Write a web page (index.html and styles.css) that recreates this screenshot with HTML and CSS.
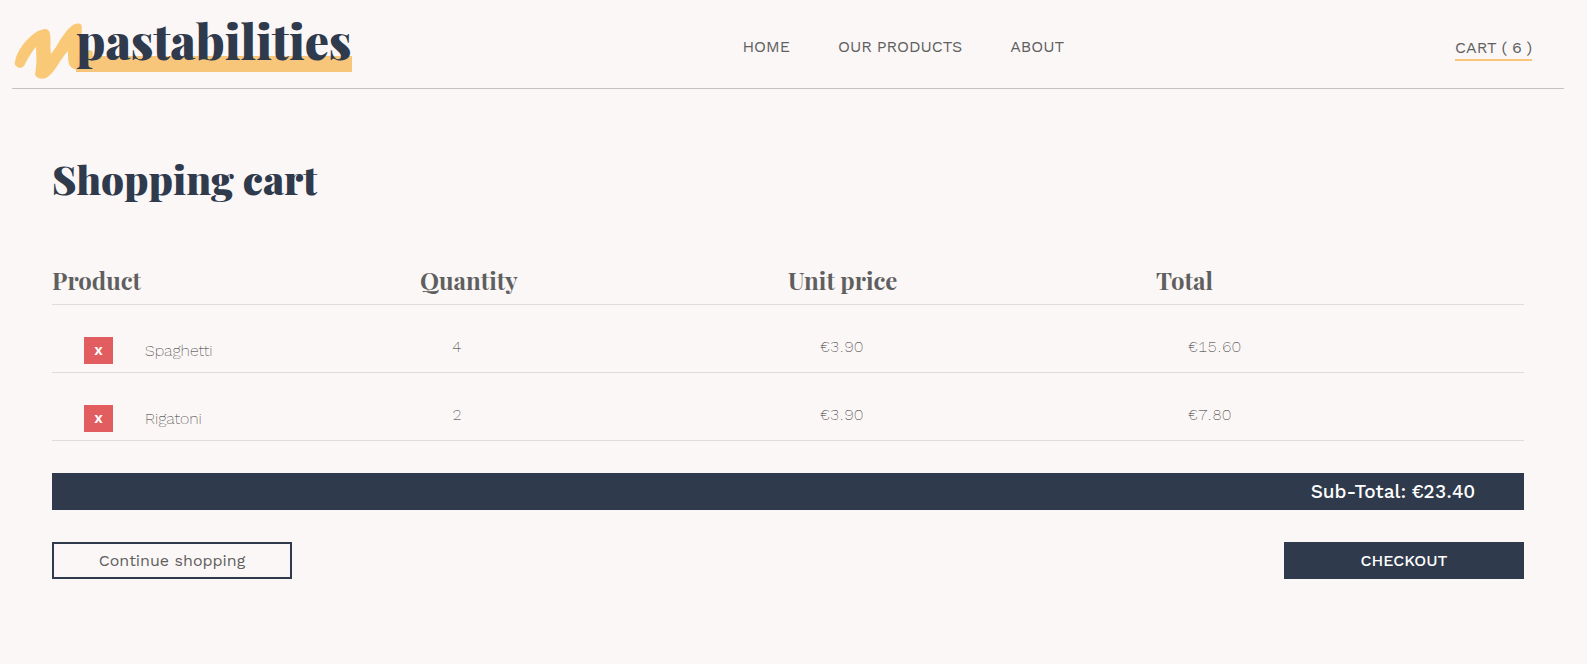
FILE: index.html
```
<!DOCTYPE html>
<html lang="en">
<head>
<meta charset="utf-8">
<meta name="viewport" content="width=device-width, initial-scale=1">
<title>Pastabilities – Shopping cart</title>
<link rel="stylesheet" href="styles.css">
</head>
<body>
<header class="header">
  <a class="logo" href="#">
    <svg class="logo-mark" viewBox="0 0 84 60" aria-hidden="true">
      <path d="M3 42C4 33 12 22 18 17C24 11 30 9 34 9C38 10 38 13 38.500 18C38.500 24 38 29 39 34L44 27C49 18 55 9 61 5C65 3 68 3 69.500 5C70 8 70 12 69 18C68 23 67 27 69 33C72 31 78 29 80 31C83 34 78 43 73 46C68 50 62 51 58 46C56 43 56 37 56 31C52 35 50 39 47 43C43 50 38 56 34 58C29 60 25 58 23 55C23 52 24 50 24 47C25 40 24 33 24 27C20 31 17 37 14 42C13 45 11 48 7 48C4 46 2 45 3 42Z" />
    </svg>
    <span class="logo-text">pastabilities</span>
  </a>
  <nav class="nav">
    <a class="nav-link" href="#">HOME</a>
    <a class="nav-link" href="#">OUR PRODUCTS</a>
    <a class="nav-link" href="#">ABOUT</a>
  </nav>
  <a class="nav-link cart-link" href="#">CART ( 6 )</a>
</header>
<main class="cart">
  <h1 class="title">Shopping cart</h1>
  <table class="items">
    <thead>
      <tr><th scope="col">Product</th><th scope="col">Quantity</th><th scope="col">Unit price</th><th scope="col">Total</th></tr>
    </thead>
    <tbody>
      <tr>
        <td><div class="product"><button class="remove" type="button" aria-label="Remove Spaghetti">x</button><span>Spaghetti</span></div></td>
        <td>4</td><td>€3.90</td><td>€15.60</td>
      </tr>
      <tr>
        <td><div class="product"><button class="remove" type="button" aria-label="Remove Rigatoni">x</button><span>Rigatoni</span></div></td>
        <td>2</td><td>€3.90</td><td>€7.80</td>
      </tr>
    </tbody>
  </table>
  <p class="subtotal">Sub-Total: €23.40</p>
  <div class="actions">
    <button class="button" type="button">Continue shopping</button>
    <button class="button button-dark" type="button">CHECKOUT</button>
  </div>
</main>
</body>
</html>
```
FILE: styles.css
```
:root {
  --navy: #2f3a4c;
  --yellow: #f7c67a;
  --grey: #5f5f5f;
  --line: #e0dcdc;
  --sans: "Work Sans", Inter, sans-serif;
  --serif: "Playfair Display", "Liberation Serif", serif;
}

* {
  box-sizing: border-box;
}

body {
  margin: 0;
  padding: 0 23px 0 12px;
  background: #fbf7f6;
  color: var(--grey);
  font: 16px/24px var(--sans);
  font-variant-numeric: tabular-nums;
}

.header {
  display: flex;
  align-items: center;
  justify-content: space-between;
  padding: 16px 32px 16px 0;
  border-bottom: 1px solid #c4c2c2;
}

.logo {
  display: flex;
  color: var(--navy);
  text-decoration: none;
}

.logo-mark {
  width: 84px;
  height: 60px;
  margin: 4px -20px -8px 0;
  fill: #fac978;
}

.logo-text {
  z-index: 1;
  height: 56px;
  background: linear-gradient(transparent 40px, var(--yellow) 40px);
  font: 900 48px/48px var(--serif);
}

.nav {
  display: flex;
  gap: 48px;
}

.nav-link {
  padding-top: 6px;
  color: var(--grey);
  text-decoration: none;
}

.cart-link {
  padding-top: 8px;
  line-height: 23px;
  border-bottom: 2px solid var(--yellow);
}

.cart {
  padding: 64px 40px;
}

.title {
  margin: 0 0 58px;
  color: var(--navy);
  font: 900 40px/52px var(--serif);
}

.items {
  width: 100%;
  table-layout: fixed;
  border-collapse: collapse;
  text-align: left;
}

.items th {
  padding: 0 0 6px;
  border-bottom: 1px solid var(--line);
  font: 700 24px/35px var(--serif);
}

.items td {
  padding: 32px 0 8px 32px;
  border-bottom: 1px solid var(--line);
  color: #333;
  line-height: 20px;
  font-weight: 200;
  vertical-align: top;
}

.product {
  display: flex;
  align-items: center;
  gap: 32px;
}

.remove {
  width: 29px;
  height: 27px;
  padding: 0;
  border: 0;
  background: #e25d5f;
  color: #fff;
  font: 600 15px/27px var(--sans);
}

.subtotal {
  margin: 32px 0;
  padding: 0 49px;
  background: var(--navy);
  color: #fff;
  font-size: 19px;
  font-weight: 500;
  line-height: 37px;
  text-align: right;
}

.actions {
  display: flex;
  justify-content: space-between;
}

.button {
  width: 240px;
  height: 37px;
  padding: 1px 0 0;
  border: 2px solid var(--navy);
  background: transparent;
  color: var(--grey);
  font: 400 16px/32px var(--sans);
}

.button-dark {
  background: var(--navy);
  color: #fff;
  font-weight: 500;
}
```
